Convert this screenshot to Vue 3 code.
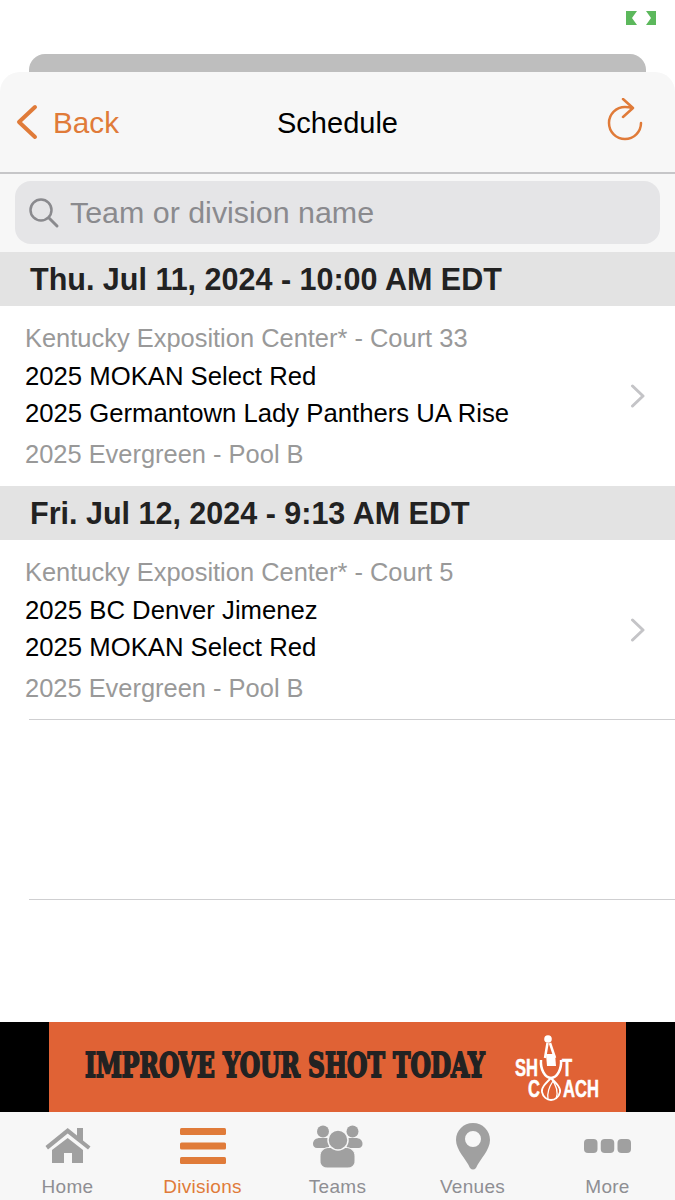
<template>
  <div class="phone">
    <div class="status">
      <svg width="30" height="14" viewBox="0 0 30 14">
        <path d="M0 0H11L6 7L11 14H0Z" fill="#5cb85c" />
        <path d="M20 0H30V14H20L25 7Z" fill="#5cb85c" />
      </svg>
    </div>
    <div class="sheet-behind"></div>

    <div class="panel">
      <div class="nav">
        <div class="back">
          <svg width="24" height="36" viewBox="0 0 24 36">
            <path d="M20 3L4 18L20 33" fill="none" stroke="#e07b39" stroke-width="4" stroke-linecap="round" stroke-linejoin="round" />
          </svg>
          <span>Back</span>
        </div>
        <div class="title">Schedule</div>
        <svg class="refresh" width="38" height="44" viewBox="0 0 38 44">
          <path d="M26 10C24 9.300 21.500 9 19 9A16 16 0 1 0 35 25" fill="none" stroke="#e07b39" stroke-width="2.500" stroke-linecap="round" />
          <path d="M17 1L27 10L17 19" fill="none" stroke="#e07b39" stroke-width="2.500" stroke-linecap="round" stroke-linejoin="round" />
        </svg>
      </div>
      <div class="search-wrap">
        <div class="search">
          <svg width="32" height="32" viewBox="0 0 32 32">
            <circle cx="13" cy="13" r="10.500" fill="none" stroke="#8a8a8e" stroke-width="2.500" />
            <path d="M21 21L29 29" stroke="#8a8a8e" stroke-width="3" stroke-linecap="round" />
          </svg>
          <span>Team or division name</span>
        </div>
      </div>
    </div>

    <div class="list">
      <template v-for="game in games" :key="game.date">
        <div class="day">{{ game.date }}</div>
        <div class="game">
          <div class="info">
            <div class="muted">{{ game.venue }}</div>
            <div class="team first">{{ game.home }}</div>
            <div class="team second">{{ game.away }}</div>
            <div class="muted pool">{{ game.pool }}</div>
          </div>
          <svg width="16" height="24" viewBox="0 0 16 24">
            <path d="M2.500 2L13 12L2.500 22" fill="none" stroke="#c4c4c7" stroke-width="3" stroke-linecap="round" stroke-linejoin="round" />
          </svg>
        </div>
      </template>
      <div class="empty-row"></div>
    </div>

    <div class="banner">
      <div class="ad">
        <span class="headline">IMPROVE YOUR SHOT TODAY</span>
        <div class="logo">
          <svg class="player" width="30" height="72" viewBox="0 0 30 72">
            <circle cx="13" cy="9" r="3.800" fill="#fff" />
            <path d="M12.500 13L10 28M15 13L20 28" stroke="#fff" stroke-width="2.500" fill="none" />
            <path d="M11 24H20L21 36H12Z" fill="#fff" />
            <path d="M6 30A10.500 16 0 0 0 16 48A10.500 16 0 0 0 26 30" fill="none" stroke="#fff" stroke-width="2.500" />
            <path d="M16 48C10 54 6 58 7 62C8 67 12 70 16 70C20 70 24 67 25 62C26 58 22 54 16 48Z" fill="none" stroke="#fff" stroke-width="1.800" />
            <path d="M16 48C22 56 24 62 21 69M18 51C14 57 12 63 13 69" fill="none" stroke="#fff" stroke-width="1.300" />
          </svg>
          <span class="mark sh">SH</span>
          <span class="mark t">T</span>
          <span class="mark c">C</span>
          <span class="mark ach">ACH</span>
        </div>
      </div>
    </div>

    <div class="tabs">
      <div class="tab">
        <div class="icon">
          <svg width="46" height="36" viewBox="0 0 46 36">
            <path d="M0.500 18L22.700 0L32 7.500V0H38V12.500L45.500 18.500L43 21.500L22.700 5.500L3 21.500Z" fill="#a0a0a0" />
            <path d="M22.700 10L38 22V35H27V25H19V35H7V22Z" fill="#a0a0a0" />
          </svg>
        </div>
        <span>Home</span>
      </div>
      <div class="tab active">
        <div class="icon">
          <svg width="46" height="36" viewBox="0 0 46 36">
            <rect x="0" y="0" width="46" height="7" rx="1.500" fill="#e07b39" />
            <rect x="0" y="14.500" width="46" height="7" rx="1.500" fill="#e07b39" />
            <rect x="0" y="29" width="46" height="7" rx="1.500" fill="#e07b39" />
          </svg>
        </div>
        <span>Divisions</span>
      </div>
      <div class="tab">
        <div class="icon">
          <svg width="50" height="43" viewBox="0 0 50 43">
            <circle cx="10" cy="6.500" r="6" fill="#a0a0a0" />
            <circle cx="39.500" cy="6.500" r="6" fill="#a0a0a0" />
            <path d="M0 19C0 15 3 13 7 13H16V23H4C1.500 23 0 21 0 19Z" fill="#a0a0a0" />
            <path d="M49.500 19C49.500 15 46.500 13 42.500 13H33.500V23H45.500C48 23 49.500 21 49.500 19Z" fill="#a0a0a0" />
            <path d="M7 31C7 26 11 22.500 16 22.500H33C38 22.500 42 26 42 31V36C42 40 39 43 35 43H14C10 43 7 40 7 36Z" fill="#a0a0a0" stroke="#f7f7f7" stroke-width="1" />
            <circle cx="25" cy="15" r="10" fill="#a0a0a0" stroke="#f7f7f7" stroke-width="1.500" />
          </svg>
        </div>
        <span>Teams</span>
      </div>
      <div class="tab">
        <div class="icon">
          <svg width="34" height="47" viewBox="0 0 34 47">
            <path fill-rule="evenodd" d="M17 0C7.500 0 0 7.500 0 17C0 27 10 36 14 45Q17 48 20 45C24 36 34 27 34 17C34 7.500 26.500 0 17 0ZM17 8A8 8 0 1 1 17 24A8 8 0 1 1 17 8Z" fill="#a0a0a0" />
          </svg>
        </div>
        <span>Venues</span>
      </div>
      <div class="tab">
        <div class="icon">
          <svg width="47" height="14" viewBox="0 0 47 14">
            <rect x="0" y="0" width="13.500" height="14" rx="4" fill="#a0a0a0" />
            <rect x="16.750" y="0" width="13.500" height="14" rx="4" fill="#a0a0a0" />
            <rect x="33.500" y="0" width="13.500" height="14" rx="4" fill="#a0a0a0" />
          </svg>
        </div>
        <span>More</span>
      </div>
    </div>
  </div>
</template>

<script setup>
const games = [
  {
    date: 'Thu. Jul 11, 2024 - 10:00 AM EDT',
    venue: 'Kentucky Exposition Center* - Court 33',
    home: '2025 MOKAN Select Red',
    away: '2025 Germantown Lady Panthers UA Rise',
    pool: '2025 Evergreen - Pool B'
  },
  {
    date: 'Fri. Jul 12, 2024 - 9:13 AM EDT',
    venue: 'Kentucky Exposition Center* - Court 5',
    home: '2025 BC Denver Jimenez',
    away: '2025 MOKAN Select Red',
    pool: '2025 Evergreen - Pool B'
  }
]
</script>

<style scoped>
.phone {
  width: 675px;
  height: 1200px;
  display: flex;
  flex-direction: column;
  background: #fff;
  overflow: hidden;
  font-family: "Liberation Sans", Arial, sans-serif;
}

.status {
  height: 54px;
  flex: none;
  display: flex;
  justify-content: flex-end;
  align-items: flex-start;
  padding: 11px 19px 0 0;
  box-sizing: border-box;
}

.sheet-behind {
  height: 34px;
  margin: 0 29px -16px;
  background: #bebebe;
  border-radius: 16px 16px 0 0;
  flex: none;
}

.panel {
  position: relative;
  background: #f7f7f7;
  border-radius: 20px 20px 0 0;
  height: 180px;
  flex: none;
}

.nav {
  height: 102px;
  box-sizing: border-box;
  border-bottom: 2px solid #c6c6c8;
  display: flex;
  align-items: center;
  justify-content: space-between;
  padding: 0 31px 0 15px;
  position: relative;
}

.back {
  display: flex;
  align-items: center;
  gap: 14px;
  color: #e07b39;
  font-size: 29.7px;
}

.back span {
  padding-top: 1px;
}

.title {
  position: absolute;
  left: 0;
  right: 0;
  text-align: center;
  font-size: 29px;
  color: #000;
  padding-top: 2px;
}

.refresh {
  margin-top: -4px;
}

.search-wrap {
  padding: 7px 15px 0;
}

.search {
  height: 63px;
  background: #e5e5e7;
  border-radius: 16px;
  display: flex;
  align-items: center;
  gap: 10px;
  padding-left: 13px;
  color: #8a8a8e;
  font-size: 30.4px;
}

.list {
  flex: 1;
}

.day {
  height: 54px;
  line-height: 54px;
  background: #e3e3e3;
  padding-left: 30px;
  font-size: 30.5px;
  font-weight: 700;
  color: #222;
}

.game {
  height: 180px;
  display: flex;
  align-items: flex-start;
  justify-content: space-between;
  padding: 17px 29px 0 25px;
  box-sizing: border-box;
}

.game svg {
  margin-top: 61px;
}

.muted {
  font-size: 25.45px;
  color: #999;
  line-height: 30px;
}

.team {
  font-size: 25.7px;
  color: #000;
  line-height: 30px;
}

.first {
  margin-top: 8px;
}

.second {
  margin-top: 7px;
}

.pool {
  margin-top: 11px;
}

.empty-row {
  margin-top: -1px;
  margin-left: 29px;
  height: 179px;
  border-top: 1px solid #cfcfd1;
  border-bottom: 1px solid #cfcfd1;
}

.banner {
  height: 90px;
  flex: none;
  background: #000;
  padding: 0 49px;
}

.ad {
  height: 90px;
  background: #e06235;
  position: relative;
  display: flex;
  align-items: center;
  padding-left: 36px;
  overflow: hidden;
}

.headline {
  font-family: "DejaVu Serif", serif;
  font-stretch: condensed;
  font-weight: 700;
  font-size: 34px;
  line-height: 40px;
  color: #222;
  white-space: nowrap;
  -webkit-text-stroke: 1.8px #222;
  transform: scaleX(0.765);
  transform-origin: left center;
  margin-top: -4px;
}

.logo {
  position: absolute;
  left: 0;
  top: 0;
  width: 100%;
  height: 90px;
  color: #fff;
}

.player {
  position: absolute;
  left: 486px;
  top: 8px;
}

/* no narrow face installed, so the logo letters are squeezed */
.mark {
  position: absolute;
  font-weight: 700;
  font-size: 23px;
  line-height: 20px;
  transform: scaleX(0.72);
  transform-origin: left center;
  -webkit-text-stroke: 0.5px #fff;
}

.sh {
  left: 466px;
  top: 36px;
}

.t {
  left: 513px;
  top: 36px;
}

.c {
  left: 479px;
  top: 57px;
}

.ach {
  left: 514px;
  top: 57px;
}

.tabs {
  height: 88px;
  flex: none;
  background: #f7f7f7;
  display: grid;
  grid-template-columns: repeat(5, 1fr);
  padding-top: 2px;
  box-sizing: border-box;
}

.tab {
  display: flex;
  flex-direction: column;
  align-items: center;
  color: #8e8e93;
  font-size: 19px;
  letter-spacing: 0.3px;
}

.icon {
  height: 64px;
  display: flex;
  align-items: center;
  justify-content: center;
}

.tab span {
  line-height: 18px;
}

.active {
  color: #e07b39;
}
</style>

<style>
body {
  margin: 0;
}
</style>
